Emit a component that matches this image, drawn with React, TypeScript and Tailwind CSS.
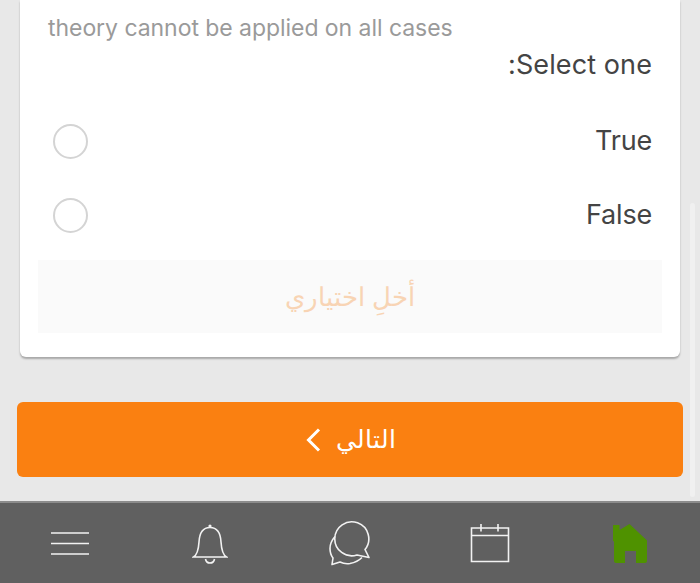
const options = ["True", "False"];

function MenuIcon() {
  return (
    <svg width="40" height="26" viewBox="0 0 40 26" fill="none" stroke="#f2f2f2" strokeWidth="1.6">
      <path d="M1 3H39M1 13.5H39M1 24H39" />
    </svg>
  );
}

function BellIcon() {
  return (
    <svg width="36" height="42" viewBox="0 0 36 42" fill="none" stroke="#f2f2f2" strokeWidth="1.6">
      <path d="M1.500 35H34.500C31 33 29.500 28 29 20C28.500 10.500 25 5.500 18 5.500C11 5.500 7.500 10.500 7 20C6.500 28 5 33 1.500 35Z" />
      <path d="M13.500 37C14 40 16 41 18 41C20 41 22 40 22.500 37" />
      <circle cx="18" cy="4" r="1.600" fill="#f2f2f2" stroke="none" />
    </svg>
  );
}

function ChatIcon() {
  return (
    <svg width="44" height="46" viewBox="0 -2.5 44 46" fill="none" stroke="#f2f2f2" strokeWidth="1.6" strokeLinejoin="round">
      <path d="M37 27A17 17 0 1 0 29 32.500L41 35Z" />
      <path d="M7 14C3.500 18 2 22 2 26C2 30 3 33 5 35.500L4 42L12 39.500C16 41.500 19 41.500 22 41C27 40 31 38 34 35" />
    </svg>
  );
}

function CalendarIcon() {
  return (
    <svg width="40" height="40" viewBox="0 0 40 40" fill="none" stroke="#f2f2f2" strokeWidth="1.6">
      <path d="M1.500 5H38.500V38.500H1.500Z" />
      <path d="M1.500 12.500H38.500M11 1V8.500M28 1V8.500" />
    </svg>
  );
}

function HomeIcon() {
  return (
    <svg width="38" height="42" viewBox="0 0 38 42" fill="#4f9200" className="blur-[0.6px]">
      <path d="M2 3H8.500V8L18.500 2L36 18.500V39C36 40 35 41 34 41H25V29H14V41H5C4 41 3 40 3 39V19L2 19.500Z" />
    </svg>
  );
}

export default function App() {
  return (
    <div className="relative flex h-[583px] w-[700px] flex-col overflow-hidden bg-[#e8e8e8] font-['Inter','DejaVu_Sans',sans-serif]">
      <div className="absolute right-[5px] top-[203px] h-[294px] w-[5px] rounded-full bg-[#f0f0f0]" />

      <div className="mx-5 rounded-b-md bg-white px-7 pb-6 pt-[14px] shadow-[0_2px_2px_rgba(0,0,0,0.28)]">
        <p className="text-[23px] leading-7 tracking-[-0.05px] text-[#9a9a9a]">theory cannot be applied on all cases</p>
        <p className="mt-[9px] text-right text-[27px] leading-7 tracking-[0.1px] text-[#444444]">:Select one</p>
        <div className="mt-[25px]">
          {options.map((option) => (
            <div key={option} className="flex h-[74px] items-center justify-between pl-[5px]">
              <span className="size-[35px] rounded-full border-2 border-[#d4d4d4]" />
              <span className="pt-px text-[27px] tracking-[-0.2px] text-[#444444]">{option}</span>
            </div>
          ))}
        </div>
        <div className="-mx-[10px] mt-2 flex h-[73px] items-center justify-center bg-[#fafafa]">
          <span dir="rtl" className="text-[26px] font-light text-[#f8d4b4]">
            أخلِ اختياري
          </span>
        </div>
      </div>

      <button className="mx-[17px] mt-[45px] flex h-[75px] items-center justify-center gap-[15px] rounded-md bg-[#fa8011] text-white">
        <svg width="16" height="24" viewBox="0 0 16 24" fill="none" stroke="white" strokeWidth="3">
          <path d="M14 1.500L3.500 12L14 22.500" />
        </svg>
        <span dir="rtl" className="text-[25px] font-light">
          التالي
        </span>
      </button>

      <nav className="mt-6 grid h-[82px] grid-cols-5 items-center justify-items-center border-t-2 border-[#8c8c8c] bg-[#606060]">
        <MenuIcon />
        <BellIcon />
        <ChatIcon />
        <CalendarIcon />
        <HomeIcon />
      </nav>
    </div>
  );
}
